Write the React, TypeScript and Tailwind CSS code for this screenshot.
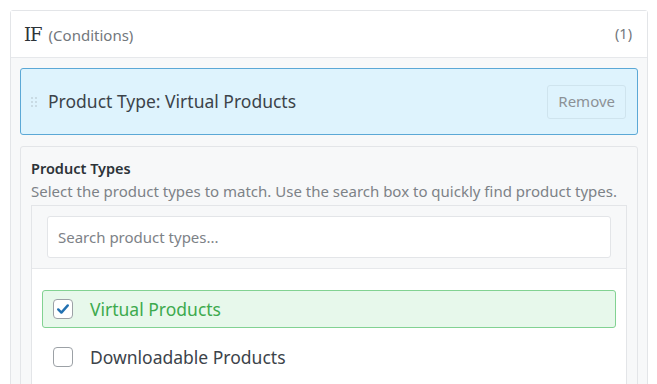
import React from 'react';

const FONT = { fontFamily: '"Noto Sans", "Open Sans", sans-serif' };

function Check() {
  return (
    <svg viewBox="0 0 20 20" className="w-[16px] h-[16px]">
      <path d="M4 10.5l4 4 8-9" fill="none" stroke="#2271b1" strokeWidth="3" strokeLinecap="round" strokeLinejoin="round" />
    </svg>
  );
}

function Row({ label, checked }: { label: string; checked?: boolean }) {
  return (
    <div
      className={`flex items-center h-[38px] px-[10px] rounded-[3px] border ${
        checked ? 'bg-[#e7f8eb] border-[#82d292]' : 'border-transparent'
      }`}
    >
      <span className="w-[20px] h-[20px] rounded-[4px] border border-[#9ca1a6] bg-white flex items-center justify-center shrink-0">
        {checked && <Check />}
      </span>
      <span className={`ml-[17px] text-[17.5px] ${checked ? 'text-[#3daa4e]' : 'text-[#3c434a]'}`}>{label}</span>
    </div>
  );
}

export default function App() {
  return (
    <div className="w-[657px] h-[384px] bg-white pt-[10px] pl-[10px] pr-[9px] overflow-hidden" style={FONT}>
      <div className="border border-[#e3e5e8] rounded-t-[3px] h-[400px] bg-[#f7f8f9]">
        {/* Header */}
        <div className="h-[47px] bg-white border-b border-[#e6e8eb] flex items-center justify-between pl-[13px] pr-[15px]">
          <div className="flex items-baseline gap-[7px]">
            <span className="text-[18px] text-[#2c3338] tracking-[-1px]" style={{ fontFamily: '"DejaVu Serif", serif' }}>IF</span>
            <span className="text-[15px] text-[#72777c]">(Conditions)</span>
          </div>
          <span className="text-[14.5px] text-[#72777c]">(1)</span>
        </div>

        <div className="px-[9px] pt-[10px]">
          {/* Condition */}
          <div className="h-[67px] bg-[#def3fd] border border-[#5ba8d6] rounded-[3px] flex items-center justify-between pl-[10px] pr-[11px]">
            <div className="flex items-center">
              <div className="grid grid-cols-2 gap-[2px] mr-[11px]">
                {[0, 1, 2, 3, 4, 5].map((i) => (
                  <span key={i} className="w-[2px] h-[2px] bg-[#c9dbe4]" />
                ))}
              </div>
              <span className="text-[17.5px] text-[#3c434a]">Product Type: Virtual Products</span>
            </div>
            <button className="h-[34px] px-[10px] border border-[#cfe4ee] rounded-[3px] text-[15px] text-[#8c9196]">
              Remove
            </button>
          </div>

          {/* Settings */}
          <div className="mt-[11px] bg-[#f7f8f9] border border-[#e3e5e8] rounded-[3px] pt-[11px] px-[10px] h-[300px]">
            <div className="text-[14.5px] font-semibold text-[#2c3338] leading-[20px]">Product Types</div>
            <div className="text-[15px] text-[#7d8287] leading-[22px] mt-[2px]">
              Select the product types to match. Use the search box to quickly find product types.
            </div>
            <div className="mt-[3px] border border-[#e3e5e8] h-[200px] bg-white">
              <div className="bg-[#f7f8f9] border-b border-[#e6e8eb] px-[15px] pt-[10px] pb-[10px]">
                <input
                  placeholder="Search product types..."
                  className="w-full h-[42px] bg-white border border-[#e3e5e8] rounded-[3px] px-[10px] text-[15px] placeholder:text-[#7d8287] outline-none"
                  style={FONT}
                />
              </div>
              <div className="px-[10px] pt-[21px] flex flex-col gap-[10px]">
                <Row label="Virtual Products" checked />
                <Row label="Downloadable Products" />
              </div>
            </div>
          </div>
        </div>
      </div>
    </div>
  );
}
